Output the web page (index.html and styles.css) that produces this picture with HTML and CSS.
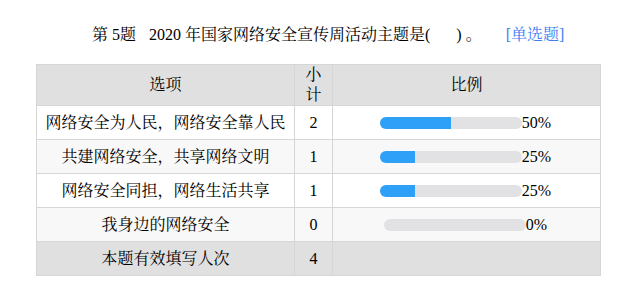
FILE: index.html
```html
<!DOCTYPE html>
<html lang="zh-CN">
<head>
<meta charset="utf-8">
<title>第 5 题</title>
<link rel="stylesheet" href="styles.css">
</head>
<body>
<div class="page">
  <div class="title"><span class="qno">第 5题</span><span class="stem">2020 年国家网络安全宣传周活动主题是(<span class="blank"></span>) 。</span><span class="qtype">[单选题]</span></div>
  <table class="stats">
    <colgroup>
      <col class="c-opt">
      <col class="c-num">
      <col class="c-pct">
    </colgroup>
    <thead>
      <tr><th>选项</th><th class="num-h">小计</th><th>比例</th></tr>
    </thead>
    <tbody>
      <tr><td>网络安全为人民，网络安全靠人民</td><td>2</td><td><div class="ratio"><span class="bar"><span class="fill" style="width:50%"></span></span><span class="pct">50%</span></div></td></tr>
      <tr class="alt"><td>共建网络安全，共享网络文明</td><td>1</td><td><div class="ratio"><span class="bar"><span class="fill" style="width:25%"></span></span><span class="pct">25%</span></div></td></tr>
      <tr><td>网络安全同担，网络生活共享</td><td>1</td><td><div class="ratio"><span class="bar"><span class="fill" style="width:25%"></span></span><span class="pct">25%</span></div></td></tr>
      <tr class="alt"><td>我身边的网络安全</td><td>0</td><td><div class="ratio"><span class="bar"><span class="fill" style="width:0%"></span></span><span class="pct">0%</span></div></td></tr>
      <tr class="total"><td>本题有效填写人次</td><td>4</td><td></td></tr>
    </tbody>
  </table>
</div>
</body>
</html>
```

FILE: styles.css
```css
html, body {
  margin: 0;
  padding: 0;
  background: #ffffff;
}

body {
  font-family: "Liberation Serif", "Noto Serif CJK SC", "Noto Sans CJK SC", serif;
  font-size: 16px;
  color: #000000;
}

.page {
  padding: 25px 0 0 36px;
}

.title {
  line-height: 20px;
  height: 20px;
  padding-left: 56px;
  white-space: pre;
}

.qno {
  margin-right: 13px;
}

.blank {
  display: inline-block;
  width: 26px;
}

.qtype {
  margin-left: 24px;
  color: #3d7df2;
}

.stats {
  margin-top: 19px;
  width: 564px;
  table-layout: fixed;
  border-collapse: collapse;
}

.c-opt { width: 258px; }
.c-num { width: 38px; }
.c-pct { width: 268px; }

.stats th,
.stats td {
  border: 1px solid #d6d6d6;
  text-align: center;
  vertical-align: middle;
  font-weight: normal;
}

.stats th {
  background: #e0e0e0;
  height: 41px;
  padding: 0 8px;
  line-height: 20px;
  box-sizing: border-box;
}

.stats td {
  height: 34px;
  padding: 0 8px;
  line-height: 20px;
  white-space: nowrap;
  box-sizing: border-box;
}

.stats td:first-child {
  padding: 0 4px;
}

.stats tr.alt td {
  background: #f8f8f8;
}

.stats tr.total td {
  background: #e0e0e0;
}

.ratio {
  display: flex;
  justify-content: center;
  align-items: center;
  height: 20px;
  padding-right: 2px;
}

.bar {
  display: block;
  flex: none;
  width: 142px;
  height: 12px;
  border-radius: 6px;
  background: #e2e2e4;
  overflow: hidden;
}

.fill {
  display: block;
  height: 100%;
  background: #2ea0f7;
}

.pct {
  display: block;
  flex: none;
}
```
